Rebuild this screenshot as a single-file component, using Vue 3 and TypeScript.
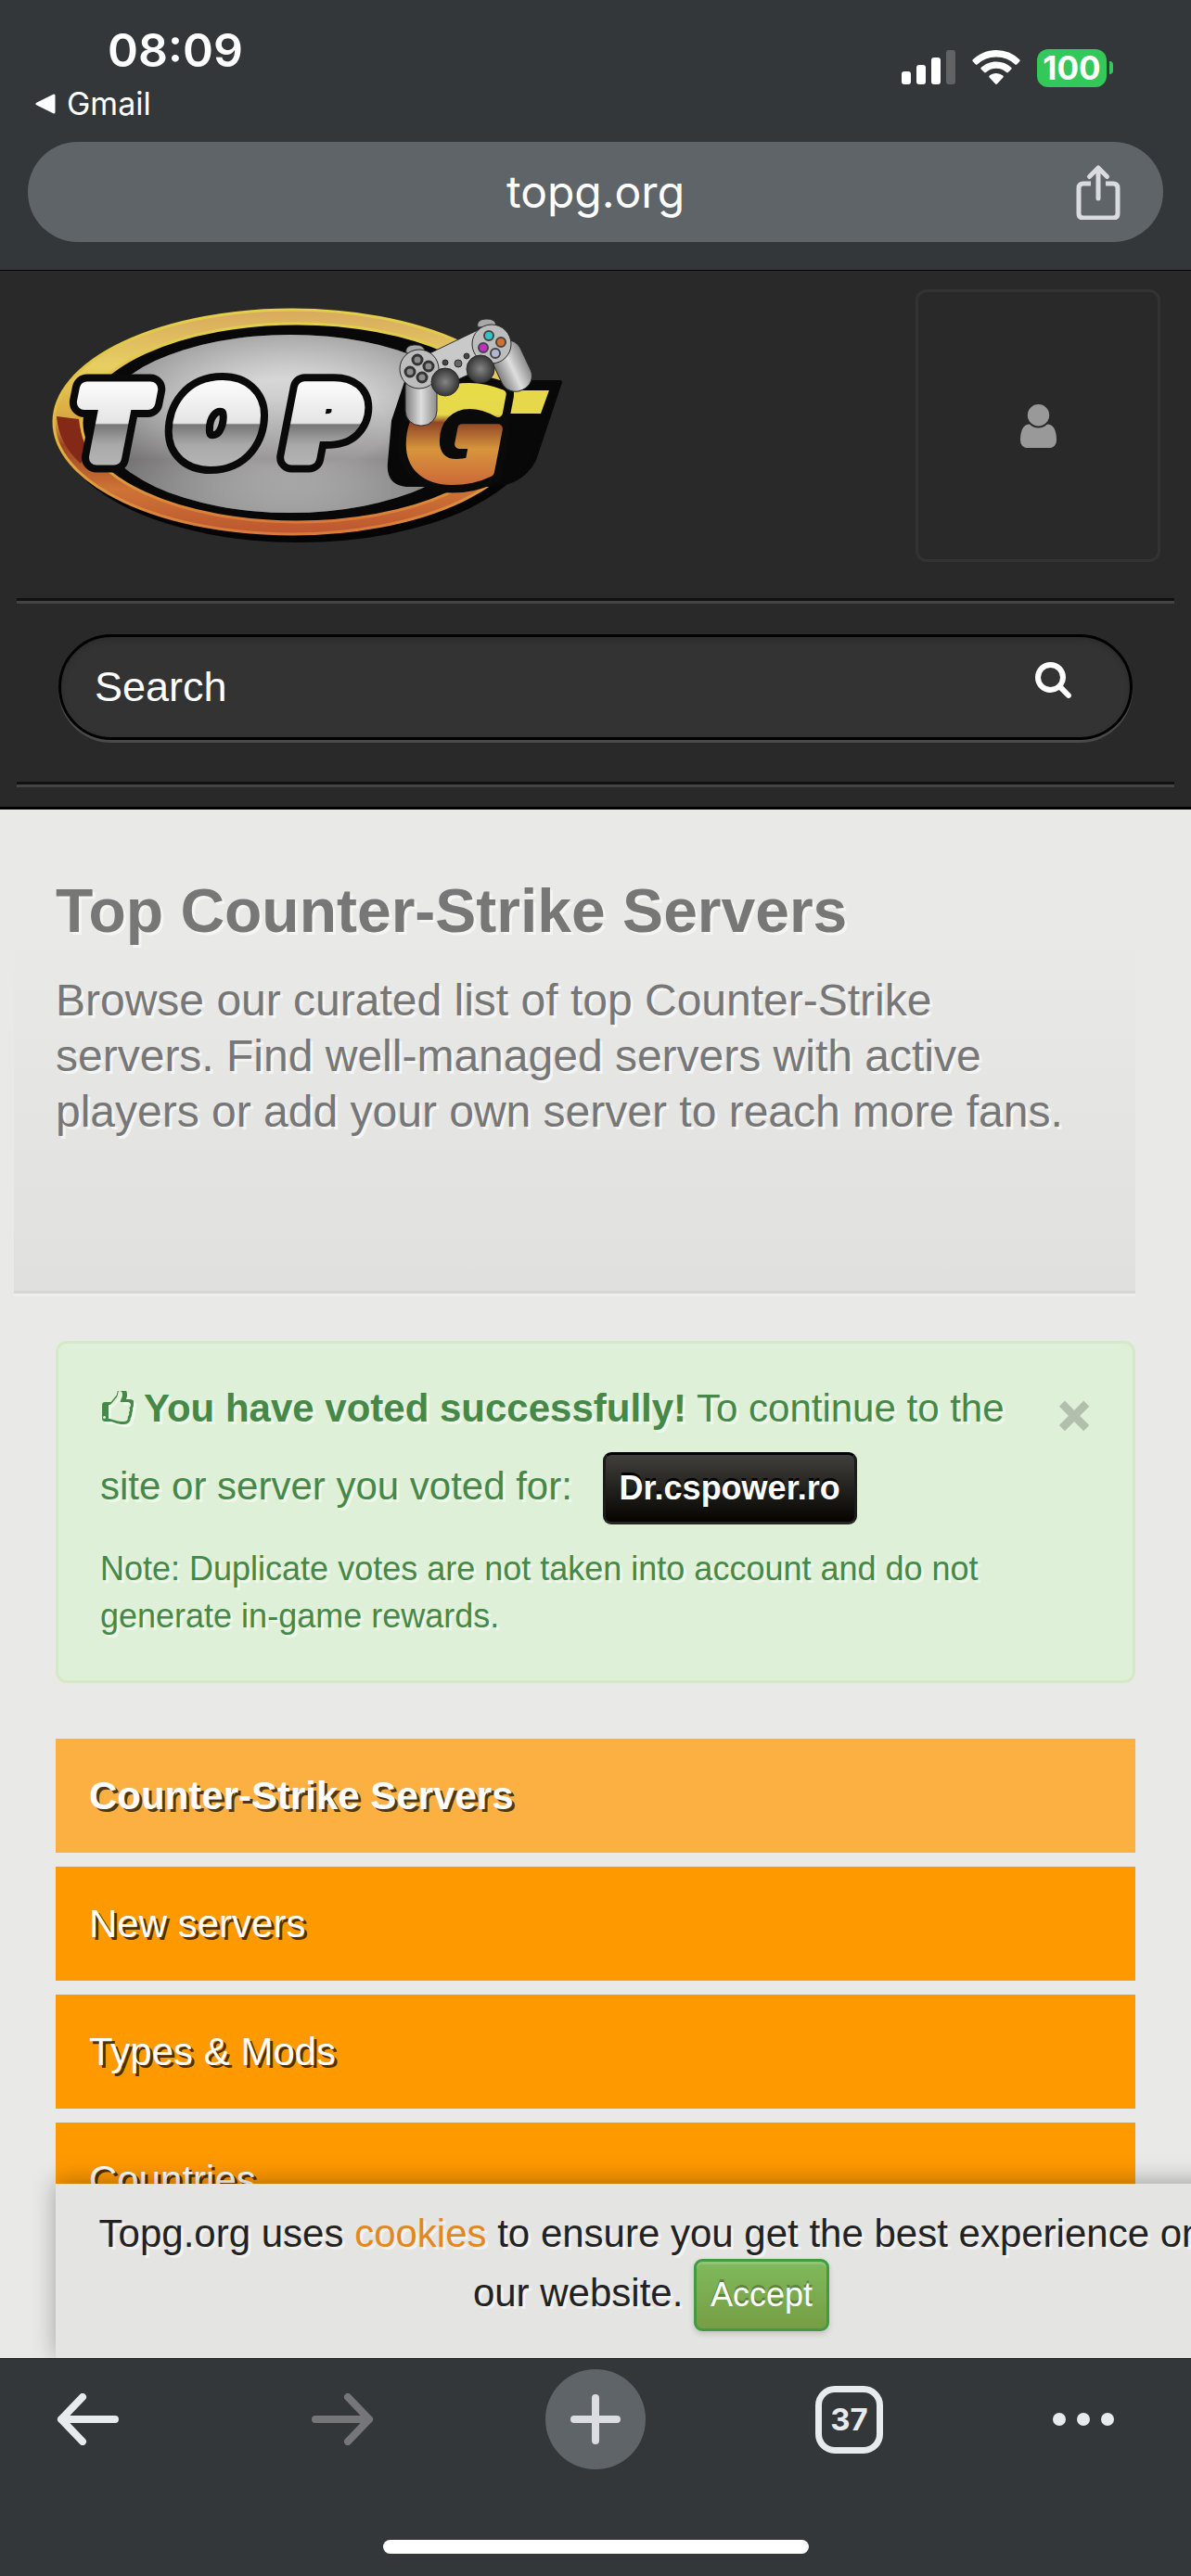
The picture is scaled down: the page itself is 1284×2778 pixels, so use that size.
<script setup lang="ts">
import { ref } from 'vue'

interface MenuItem {
  label: string
  active?: boolean
}

const query = ref('')
const tabCount = 37

const menu: MenuItem[] = [
  { label: 'Counter-Strike Servers', active: true },
  { label: 'New servers' },
  { label: 'Types & Mods' },
  { label: 'Countries' },
]
</script>

<template>
  <div class="phone">
    <header class="chrome">
      <div class="status">
        <div class="status-left">
          <time class="clock">08:09</time>
          <a href="#" class="back-app">
            <svg width="22" height="22" viewBox="0 0 22 22" aria-hidden="true">
              <path d="M20 2v18L2 11z" fill="#fff" stroke="#fff" stroke-width="3" stroke-linejoin="round" />
            </svg>
            Gmail
          </a>
        </div>
        <div class="status-right">
          <svg width="58" height="38" viewBox="0 0 58 38" aria-label="Signal">
            <rect x="0" y="23" width="10" height="14" rx="3" fill="#fff" />
            <rect x="16" y="16" width="10" height="21" rx="3" fill="#fff" />
            <rect x="32" y="8" width="10" height="29" rx="3" fill="#fff" />
            <rect x="48" y="0" width="10" height="37" rx="3" fill="#606264" />
          </svg>
          <svg width="52" height="38" viewBox="0 0 52 38" aria-label="Wi-Fi" fill="#fff">
            <path d="M26 0C16.500 0 7.500 3.700.8 10.300c-.6.600-.6 1.300 0 1.900l3 3.200c.5.500 1.300.5 1.800 0A29.500 29.500 0 0 1 26 7.400a29.500 29.500 0 0 1 20.400 8c.5.500 1.300.5 1.800 0l3-3.200c.6-.6.600-1.300 0-1.900A36 36 0 0 0 26 0z" />
            <path d="M26 12.500c-6.200 0-11.900 2.400-16.200 6.300-.6.600-.6 1.300 0 1.900l3.300 3.400c.5.500 1.200.5 1.800 0a16.500 16.500 0 0 1 22.200 0c.6.500 1.300.5 1.800 0l3.300-3.400c.6-.6.600-1.300 0-1.900A24 24 0 0 0 26 12.500z" />
            <path d="M26 25c-2.800 0-5.300 1-7.300 2.600-.6.500-.6 1.300-.1 1.800l6.500 7.200c.5.500 1.300.5 1.800 0l6.500-7.200c.5-.5.500-1.300-.1-1.800A11.600 11.600 0 0 0 26 25z" />
          </svg>
          <div class="battery">
            <span class="battery-body">100</span>
            <span class="battery-nub"></span>
          </div>
        </div>
      </div>
      <div class="url">
        <span class="url-text">topg.org</span>
        <button type="button" class="share" aria-label="Share">
          <svg width="50" height="60" viewBox="0 0 50 60" fill="none" stroke="#d9dbe0" stroke-width="5" stroke-linecap="round" stroke-linejoin="round">
            <path d="M17 21H9q-5 0-5 5v27q0 5 5 5h32q5 0 5-5V26q0-5-5-5h-8" stroke-linecap="butt" />
            <path d="M25 37V5M15.500 13.500L25 4l9.500 9.500" />
          </svg>
        </button>
      </div>
    </header>

    <main class="page">
      <div class="site-head">
        <div class="brand-row">
          <a href="#" class="logo" aria-label="TopG">
            <svg width="556" height="262" viewBox="52 328 556 262">
              <defs>
                <linearGradient id="ring" x1="0" y1="0" x2="0" y2="1">
                  <stop offset="0" stop-color="#d8a95e" />
                  <stop offset="0.250" stop-color="#e6cf62" />
                  <stop offset="0.500" stop-color="#d9a53c" />
                  <stop offset="0.600" stop-color="#9a4424" />
                  <stop offset="0.800" stop-color="#cd7436" />
                  <stop offset="1" stop-color="#bd5630" />
                </linearGradient>
                <linearGradient id="rim" x1="0" y1="0" x2="0" y2="1">
                  <stop offset="0" stop-color="#e3cf4c" />
                  <stop offset="0.600" stop-color="#e3b53f" />
                  <stop offset="1" stop-color="#d9793a" />
                </linearGradient>
                <linearGradient id="plate" x1="0" y1="0" x2="0" y2="1">
                  <stop offset="0" stop-color="#ebebeb" />
                  <stop offset="0.350" stop-color="#cfcfcf" />
                  <stop offset="0.700" stop-color="#9a9898" />
                  <stop offset="1" stop-color="#dcdcdc" />
                </linearGradient>
                <radialGradient id="plateShade" cx="0.500" cy="0.500" r="0.500">
                  <stop offset="0.500" stop-color="#000" stop-opacity="0" />
                  <stop offset="1" stop-color="#000" stop-opacity="0.280" />
                </radialGradient>
                <linearGradient id="silver" gradientUnits="userSpaceOnUse" x1="0" y1="416" x2="0" y2="500">
                  <stop offset="0" stop-color="#fafafa" />
                  <stop offset="0.480" stop-color="#e4e4e4" />
                  <stop offset="0.500" stop-color="#767676" />
                  <stop offset="0.750" stop-color="#a8a8a8" />
                  <stop offset="1" stop-color="#b4b4b4" />
                </linearGradient>
                <linearGradient id="gold" gradientUnits="userSpaceOnUse" x1="0" y1="415" x2="0" y2="522">
                  <stop offset="0" stop-color="#e8dc48" />
                  <stop offset="0.300" stop-color="#e6d84a" />
                  <stop offset="0.380" stop-color="#8f4526" />
                  <stop offset="0.650" stop-color="#d7953c" />
                  <stop offset="1" stop-color="#cd6a38" />
                </linearGradient>
                <linearGradient id="grip" x1="0" y1="0" x2="1" y2="0">
                  <stop offset="0" stop-color="#7e7e7e" />
                  <stop offset="0.500" stop-color="#dedede" />
                  <stop offset="1" stop-color="#8b8b8b" />
                </linearGradient>
                <radialGradient id="stick">
                  <stop offset="0" stop-color="#858585" />
                  <stop offset="1" stop-color="#353535" />
                </radialGradient>
              </defs>
              <ellipse cx="322" cy="462" rx="258" ry="123" fill="#050505" />
              <ellipse cx="315" cy="455" rx="257" ry="121" fill="url(#ring)" stroke="url(#rim)" stroke-width="3" />
              <path d="M61 449l24 3q1 16 10 30l-8 18q-24-22-26-51z" fill="#842818" />
              <ellipse cx="320" cy="456" rx="232" ry="107" fill="#080808" stroke="url(#rim)" stroke-width="3" />
              <ellipse cx="313" cy="457" rx="206" ry="96" fill="url(#plate)" />
              <ellipse cx="313" cy="457" rx="206" ry="96" fill="url(#plateShade)" />
              <path d="M424 454l14-42h166l-28 84q-14 26-46 27h-92q-20-2-18-24z" fill="#080808" stroke="#080808" stroke-width="4" stroke-linejoin="round" />
              <path d="M510 421h82l-9 25h-76z" fill="#e6d84a" />
              <g class="logo-text" stroke-linejoin="round">
                <g fill="#0a0a0a" stroke="#0a0a0a">
                  <text x="86 190 312" y="494" font-size="102" stroke-width="32">TOP</text>
                  <text x="438" y="516" font-size="132" stroke-width="27">G</text>
                </g>
                <text x="86 190 312" y="494" font-size="102" fill="url(#silver)" stroke="url(#silver)" stroke-width="16">TOP</text>
                <text x="438" y="516" font-size="132" fill="url(#gold)" stroke="url(#gold)" stroke-width="10">G</text>
              </g>
              <g stroke="#2b2b2b" stroke-width="1">
                <path d="M455 385L515 356l8 40-40 18-22-4z" fill="#c9c9c9" />
                <rect x="437" y="400" width="34" height="59" rx="16" fill="url(#grip)" />
                <rect x="534" y="366" width="34" height="57" rx="16" fill="url(#grip)" transform="rotate(-25 551 394)" />
                <path d="M438 381q-2-8 8-9 12-1 12 8zM515 353q-2-8 8-9 12-1 12 8z" fill="#a8a8a8" />
                <circle cx="452" cy="398" r="21" fill="#bdbdbd" />
                <circle cx="530" cy="371" r="21" fill="#bdbdbd" />
                <circle cx="480" cy="412" r="15" fill="url(#stick)" />
                <circle cx="518" cy="398" r="15" fill="url(#stick)" />
                <g fill="#8d8d8d" stroke="#333" stroke-width="3">
                  <circle cx="450" cy="388" r="5" />
                  <circle cx="462" cy="395" r="5" />
                  <circle cx="442" cy="401" r="5" />
                  <circle cx="455" cy="407" r="5" />
                </g>
                <circle cx="494" cy="392" r="4" fill="#666" />
                <circle cx="480" cy="391" r="3" fill="#444" />
                <circle cx="503" cy="384" r="3" fill="#444" />
                <g stroke="#444" stroke-width="2">
                  <circle cx="527" cy="362" r="5" fill="#35c3c6" />
                  <circle cx="540" cy="369" r="5" fill="#cf7230" />
                  <circle cx="521" cy="375" r="5" fill="#c22fc4" />
                  <circle cx="534" cy="381" r="5" fill="#b2b6d6" />
                </g>
              </g>
            </svg>
          </a>
          <button type="button" class="account" aria-label="Account">
            <svg width="39" height="47" viewBox="256 128 1280 1536" fill="#999">
              <path d="M1536 1399q0 109-62.500 187t-150.500 78h-854q-88 0-150.500-78t-62.500-187q0-85 8.500-160.500t31.500-152 58.500-131 94-89 134.500-34.500q131 128 313 128t313-128q76 0 134.500 34.500t94 89 58.500 131 31.500 152 8.500 160.500zm-256-887q0 159-112.500 271.500t-271.500 112.500-271.500-112.500-112.500-271.500 112.500-271.500 271.500-112.500 271.500 112.500 112.500 271.500z" />
            </svg>
          </button>
        </div>
        <form class="search-row" @submit.prevent>
          <div class="search">
            <input v-model="query" type="text" placeholder="Search" aria-label="Search" />
            <button type="submit" aria-label="Search">
              <svg width="39" height="39" viewBox="64 128 1664 1664" fill="#fff">
                <path d="M1216 832q0-185-131.500-316.500t-316.500-131.500-316.500 131.500-131.500 316.500 131.500 316.500 316.500 131.500 316.500-131.500 131.500-316.500zm512 832q0 52-38 90t-90 38q-54 0-90-38l-343-342q-179 124-399 124-143 0-273.500-55.500t-225-150-150-225-55.500-273.500 55.500-273.500 150-225 225-150 273.500-55.500 273.500 55.500 225 150 150 225 55.500 273.500q0 220-124 399l343 343q37 37 37 90z" />
              </svg>
            </button>
          </div>
        </form>
      </div>

      <section class="hero">
        <h1>Top Counter-Strike Servers</h1>
        <p>Browse our curated list of top Counter-Strike servers. Find well-managed servers with active players or add your own server to reach more fans.</p>
      </section>

      <div class="alert" role="alert">
        <div class="alert-body">
          <p class="voted">
            <svg width="36" height="39" viewBox="128 128 1536 1664" fill="#468847" aria-hidden="true">
              <path d="M384 1344q0-26-19-45t-45-19-45 19-19 45 19 45 45 19 45-19 19-45zm1152-576q0-51-39-89.500t-89-38.500h-352q0-58 48-159.500t48-160.500q0-98-32-145t-128-47q-26 26-38 85t-30.500 125.500-59.500 109.500q-22 23-77 91-4 5-23 30t-31.500 41-34.500 42.500-40 44-38.500 35.500-40 27-35.500 9h-32v640h32q13 0 31.500 3t33 6.500 38 11 35 11.500 35.500 12.500 29 10.500q211 73 342 73h121q192 0 192-167 0-26-5-56 30-16 47.500-52.500t17.500-73.500-18-69q53-50 53-119 0-25-10-55.500t-25-47.500q32-1 53.500-47t21.500-81zm128-1q0 89-49 163 9 33 9 69 0 77-38 144 3 21 3 43 0 101-60 178 1 139-85 219.500t-227 80.500h-36q-96 0-191.500-22.500t-220.500-66.500q-116-40-138-40h-288q-53 0-90.500-37.500t-37.500-90.500v-640q0-53 37.500-90.500t90.500-37.500h274q36-24 137-155 58-75 107-128 24-25 35.500-85.500t30.500-126.500 62-108q39-37 90-37 84 0 151 32.500t102 101.500 35 186q0 93-48 192h176q104 0 180 76t76 179z" />
            </svg>
            <strong>You have voted successfully!</strong> To continue to the site or server you voted for:
            <a href="#" class="btn btn-dark">Dr.cspower.ro</a>
          </p>
          <p class="note">Note: Duplicate votes are not taken into account and do not generate in-game rewards.</p>
        </div>
        <button type="button" class="close" aria-label="Close">×</button>
      </div>

      <nav class="menu">
        <a v-for="item in menu" :key="item.label" href="#" :class="{ active: item.active }">{{ item.label }}</a>
      </nav>

      <div class="cookie">
        Topg.org uses <a href="#">cookies</a> to ensure you get the best experience on our website.
        <button type="button" class="btn btn-green">Accept</button>
      </div>
    </main>

    <footer class="toolbar">
      <div class="tools">
        <button type="button" aria-label="Back">
          <svg width="68" height="56" viewBox="0 0 68 56" fill="none" stroke="#e8ebee" stroke-width="8" stroke-linecap="round" stroke-linejoin="round">
            <path d="M63 28H5M28 4L5 28l23 24" />
          </svg>
        </button>
        <button type="button" aria-label="Forward">
          <svg width="68" height="56" viewBox="0 0 68 56" fill="none" stroke="#767678" stroke-width="8" stroke-linecap="round" stroke-linejoin="round">
            <path d="M5 28h58M40 4l23 24-23 24" />
          </svg>
        </button>
        <button type="button" aria-label="New tab">
          <svg width="108" height="108" viewBox="0 0 108 108">
            <circle cx="54" cy="54" r="54" fill="#5f6468" />
            <path d="M54 31v46M31 54h46" stroke="#dcdde2" stroke-width="8" stroke-linecap="round" />
          </svg>
        </button>
        <button type="button" aria-label="Tabs"><span class="tabs">{{ tabCount }}</span></button>
        <button type="button" class="more" aria-label="More">
          <svg width="68" height="16" viewBox="0 0 68 16" fill="#e8ebee">
            <circle cx="7" cy="8" r="7" />
            <circle cx="33" cy="8" r="7" />
            <circle cx="59" cy="8" r="7" />
          </svg>
        </button>
      </div>
      <div class="home-bar"></div>
    </footer>
  </div>
</template>

<style>
body {
  background: #33373a;
}
</style>

<style scoped>
* {
  box-sizing: border-box;
}
.phone {
  display: flex;
  flex-direction: column;
  height: 100vh;
  font-family: "Liberation Sans", Arial, sans-serif;
  color: #222;
}
button {
  border: 0;
  padding: 0;
  background: none;
  font-family: inherit;
  cursor: pointer;
}
svg {
  display: block;
}
a {
  text-decoration: none;
}

.chrome {
  flex: none;
  padding: 22px 30px 30px;
  background: #33373a;
  color: #fff;
  font-family: Inter, sans-serif;
}
.status {
  display: flex;
  justify-content: space-between;
  height: 131px;
  padding: 0 54px 0 8px;
}
.clock {
  display: block;
  padding-left: 78px;
  font-size: 50px;
  font-weight: 600;
  line-height: 64px;
}
.back-app {
  display: flex;
  align-items: center;
  gap: 12px;
  color: #fff;
  font-size: 34px;
  line-height: 52px;
}
.status-right {
  display: flex;
  align-items: center;
  gap: 18px;
  height: 102px;
}
.battery {
  display: flex;
  align-items: center;
  gap: 3px;
}
.battery-body {
  width: 75px;
  border-radius: 12px;
  background: #34c759;
  font-size: 35px;
  font-weight: 700;
  line-height: 41px;
  text-align: center;
}
.battery-nub {
  width: 4px;
  height: 14px;
  border-radius: 0 4px 4px 0;
  background: #34c759;
}
.url {
  display: flex;
  align-items: center;
  height: 108px;
  padding: 0 45px;
  border-radius: 54px;
  background: #5f6468;
}
.url-text {
  flex: 1;
  padding-left: 50px;
  font-size: 48px;
  line-height: 60px;
  text-align: center;
}

.page {
  position: relative;
  flex: 1;
  min-height: 0;
  overflow: hidden;
  background: #e9e9e7;
}
.site-head {
  border-top: 1px solid #000;
  border-bottom: 3px solid #000;
  background: #292929;
  padding: 0 18px 21px;
}
.brand-row {
  display: flex;
  align-items: center;
  justify-content: space-between;
  padding: 20px 15px 39px 34px;
}
.logo-text {
  font-family: "DejaVu Sans", sans-serif;
  font-weight: 700;
  font-style: italic;
}
.account {
  display: flex;
  align-items: center;
  justify-content: center;
  width: 264px;
  height: 294px;
  border: 3px solid #333;
  border-radius: 12px;
}
.search-row {
  padding: 36px 45px 48px;
  border-top: 3px solid #111;
  border-bottom: 3px solid #444;
  box-shadow: inset 0 3px 0 #444, inset 0 -3px 0 #111;
}
.search {
  display: flex;
  align-items: center;
  height: 114px;
  padding: 0 63px 0 36px;
  border: 3px solid #000;
  border-radius: 57px;
  background: #333;
  box-shadow: 0 3px 0 #4a4a4a, inset 0 3px 6px rgba(0, 0, 0, 0.15);
}
.search input {
  flex: 1;
  min-width: 0;
  padding: 0;
  border: 0;
  outline: 0;
  background: none;
  color: #fff;
  font-family: inherit;
  font-size: 45px;
  line-height: 54px;
}
.search input::placeholder {
  color: #fff;
  opacity: 1;
}
.search button {
  padding-bottom: 16px;
}

.hero {
  margin: 0 60px 0 15px;
  padding: 73px 45px 163px;
  border-bottom: 3px solid #d6d6d4;
  background: linear-gradient(rgba(0, 0, 0, 0) 25%, rgba(0, 0, 0, 0.04));
  box-shadow: 0 3px 0 #efefed;
  color: #777;
  text-shadow: 3px 3px 0 #f5f5f4;
}
.hero h1 {
  margin: 0 0 31px;
  font-size: 66px;
  line-height: 72px;
}
.hero p {
  margin: 0;
  font-size: 48px;
  line-height: 60px;
}

.alert {
  display: flex;
  align-items: flex-start;
  justify-content: space-between;
  margin: 51px 60px 60px;
  padding: 28px 42px 44px 45px;
  border: 3px solid #d6e9c6;
  border-radius: 12px;
  background: #dff0d8;
  color: #468847;
  text-shadow: 3px 3px 0 rgba(255, 255, 255, 0.5);
}
.alert-body {
  flex: 1;
}
.alert p {
  margin: 0;
}
.voted {
  font-size: 42px;
  line-height: 84px;
}
.voted svg {
  display: inline-block;
  margin-right: 11px;
  vertical-align: -6px;
  filter: drop-shadow(3px 3px 0 rgba(255, 255, 255, 0.5));
}
.alert .note {
  margin-top: 21px;
  font-size: 36px;
  line-height: 51px;
}
.close {
  width: 42px;
  color: #000;
  opacity: 0.2;
  font-family: "DejaVu Sans", sans-serif;
  font-size: 48px;
  font-weight: 700;
  line-height: 96px;
  -webkit-text-stroke: 3px #000;
}
.btn {
  display: inline-block;
  border: 3px solid;
  border-radius: 9px;
  color: #fff;
  font-size: 36px;
  line-height: 72px;
}
.btn-dark {
  margin-left: 21px;
  padding: 0 15px;
  border-color: #000 #1c1c1c #262626;
  background: linear-gradient(#403f3b, #050400);
  font-weight: 700;
  text-shadow: 0 -3px 0 #000;
}
.btn-green {
  padding: 0 15px;
  border-color: #429a42;
  background: linear-gradient(#80b95c, #779e44);
  box-shadow: inset 0 3px 0 rgba(255, 255, 255, 0.15), 0 3px 6px rgba(0, 0, 0, 0.15);
  text-shadow: 0 -3px 0 rgba(0, 0, 0, 0.25);
}

.menu {
  display: flex;
  flex-direction: column;
  gap: 15px;
  margin: 0 60px;
}
.menu a {
  padding: 0 36px;
  background: #ff9900;
  color: #fff;
  font-size: 42px;
  line-height: 123px;
  text-shadow: 3px 3px 0 rgba(0, 0, 0, 0.7);
}
.menu a.active {
  background: #fdb042;
  font-weight: 700;
}

/* The consent bar lies over the page and runs off its right edge. */
.cookie {
  position: absolute;
  left: 60px;
  right: -60px;
  bottom: 0;
  padding: 27px 30px 29px;
  background: #e4e4e2;
  box-shadow: 0 -3px 24px rgba(0, 0, 0, 0.3);
  font-size: 42px;
  line-height: 54px;
  text-align: center;
  text-shadow: 3px 3px 0 #f2f2f1;
}
.cookie a {
  color: #e38720;
}

.toolbar {
  flex: none;
  padding: 11px 0 24px;
  border-top: 1px solid #17191a;
  background: #33373a;
}
.tools {
  display: flex;
  align-items: center;
  justify-content: space-between;
  padding: 0 41px;
}
.tools button {
  display: flex;
  justify-content: center;
  width: 108px;
}
.tools .more {
  justify-content: flex-start;
}
.tabs {
  width: 73px;
  border: 7px solid #e8ebee;
  border-radius: 21px;
  color: #e8ebee;
  font-family: Inter, sans-serif;
  font-size: 33px;
  font-weight: 700;
  line-height: 59px;
  text-align: center;
}
.home-bar {
  width: 459px;
  height: 15px;
  margin: 76px auto 0;
  border-radius: 8px;
  background: #fff;
}
</style>
